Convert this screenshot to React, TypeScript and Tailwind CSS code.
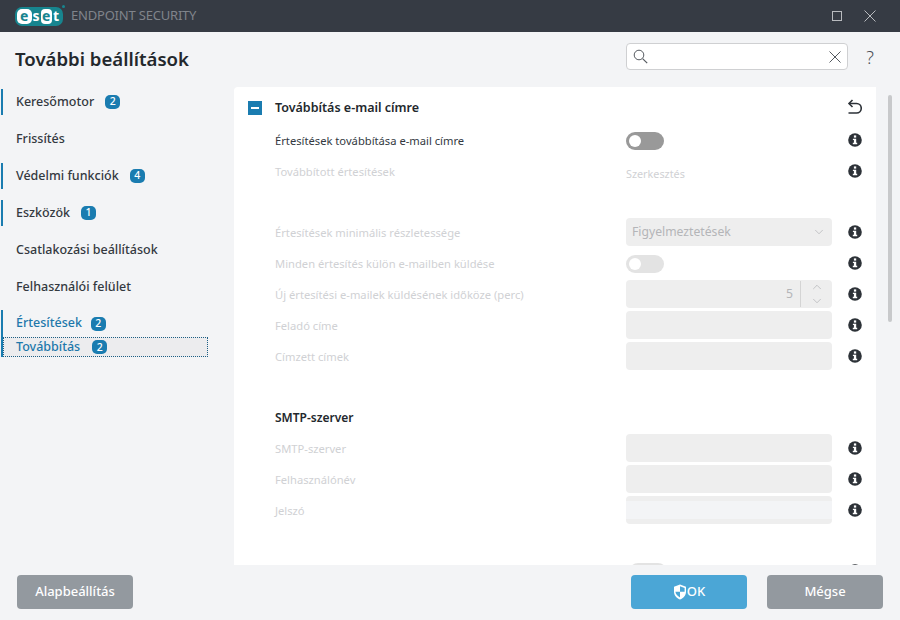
import { ChevronDown, ChevronUp } from "lucide-react"

const font = { fontFamily: '"Noto Sans", sans-serif' }

function Badge({ n }: { n: number }) {
  return (
    <span className="flex h-[14px] w-[15px] items-center justify-center rounded-[5px] bg-[#1a7cb0] text-[10.5px] font-medium leading-none text-white">
      {n}
    </span>
  )
}

function InfoIcon() {
  return (
    <svg width="14" height="14" viewBox="0 0 14 14" className="shrink-0">
      <circle cx="7" cy="7" r="6.8" fill="#2d3238" />
      <rect x="5.9" y="2.4" width="2.3" height="2.2" fill="#fff" />
      <path d="M4.9 5.7h3.3v4.1h1v1.5H4.8V9.8h1.1V7.1h-1z" fill="#fff" />
    </svg>
  )
}

function NavItem({ label, badge, bar }: { label: string; badge?: number; bar?: boolean }) {
  return (
    <div className="flex h-[37px] items-center">
      <div className={`h-[26px] w-[2px] ${bar ? "bg-[#1a7cb0]" : ""}`} />
      <span className="ml-[13px] pt-[1px] text-[12.5px] font-medium text-[#33393f]">{label}</span>
      {badge ? <span className="ml-[11px]"><Badge n={badge} /></span> : null}
    </div>
  )
}

function Row({ label, active, children }: { label: string; active?: boolean; children?: React.ReactNode }) {
  return (
    <div className="flex h-[31px] items-center">
      <span className={`w-[392px] pl-[41px] pt-[2px] text-[11.2px] ${active ? "text-[#33393f]" : "text-[#d0d1d4]"}`}>{label}</span>
      <div className="w-[206px]">{children}</div>
      <div className="mb-[2px] ml-[16px]"><InfoIcon /></div>
    </div>
  )
}

function Field({ children, className }: { children?: React.ReactNode; className?: string }) {
  return <div className={`mb-[2px] flex h-[28px] items-center rounded-[4px] bg-[#eeeeee] ${className ?? ""}`}>{children}</div>
}

function Toggle({ dark }: { dark?: boolean }) {
  return (
    <div className={`flex h-[18px] w-[38px] items-center rounded-full pl-[3px] ${dark ? "bg-[#999999]" : "bg-[#e3e3e3]"}`}>
      <div className="h-[12px] w-[12px] rounded-full bg-white" />
    </div>
  )
}

export default function App() {
  return (
    <div style={font} className="flex h-[620px] w-[900px] flex-col overflow-hidden bg-[#f3f4f6]">
      {/* title bar */}
      <div className="flex h-[32px] shrink-0 items-center bg-[#363b44]">
        <div className="relative ml-[15px] flex h-[19px] w-[48px] items-center justify-center rounded-[7px] bg-[#17858f]">
          <div className="absolute left-[2px] h-[15px] w-[15px] rounded-[5px] bg-white" />
          <div className="absolute left-[26px] h-[15px] w-[11px] rounded-[4px] bg-white" />
          <span className="absolute left-[5px] text-[14px] font-bold leading-none text-[#17858f]">e</span>
          <span className="absolute left-[17.5px] text-[14px] font-bold leading-none text-white">s</span>
          <span className="absolute left-[27px] text-[14px] font-bold leading-none text-[#17858f]">e</span>
          <span className="absolute left-[38px] text-[14px] font-bold leading-none text-white">t</span>
          <div className="absolute -right-[2px] -top-[2px] h-[3px] w-[3px] rounded-full bg-[#17858f]" />
        </div>
        <span className="ml-[8px] text-[13px] tracking-[-0.2px] text-[#80848b]">ENDPOINT SECURITY</span>
        <svg width="12" height="12" viewBox="0 0 12 12" className="ml-auto" fill="none" stroke="#b9bbbf">
          <rect x="1.5" y="1.5" width="9" height="9" />
        </svg>
        <svg width="12" height="12" viewBox="0 0 12 12" className="ml-[21px] mr-[24px]" fill="none" stroke="#b9bbbf">
          <path d="M0.5 0.5l11 11M11.5 0.5l-11 11" />
        </svg>
      </div>

      {/* header */}
      <div className="flex h-[55px] shrink-0 items-center">
        <h1 className="-mt-[2px] ml-[15px] text-[18.6px] font-semibold text-[#23282d]">További beállítások</h1>
        <div className="-mt-[6px] ml-auto flex h-[27px] w-[222px] items-center rounded-[4px] border border-[#cfd0d2] bg-white px-[6px]">
          <svg width="15" height="15" viewBox="0 0 15 15" fill="none" stroke="#555a60">
            <circle cx="6" cy="6" r="4.8" />
            <path d="M9.6 9.6l4.6 4.6" strokeWidth="1.2" />
          </svg>
          <svg width="12" height="12" viewBox="0 0 12 12" className="ml-auto" fill="none" stroke="#555a60">
            <path d="M0.5 0.5l11 11M11.5 0.5l-11 11" />
          </svg>
        </div>
        <span className="-mt-[4px] ml-[18px] mr-[26px] text-[18px] font-light text-[#4a4f55]">?</span>
      </div>

      {/* body */}
      <div className="flex min-h-0 flex-1">
        <nav className="-mt-[4px] w-[234px] shrink-0 pl-[1px]">
          <NavItem label="Keresőmotor" badge={2} bar />
          <NavItem label="Frissítés" />
          <NavItem label="Védelmi funkciók" badge={4} bar />
          <NavItem label="Eszközök" badge={1} bar />
          <NavItem label="Csatlakozási beállítások" />
          <NavItem label="Felhasználói felület" />
          <div className="mt-[5px] w-[207px] border-l-2 border-[#1a7cb0]">
            <div className="flex h-[27px] items-center pl-[13px]">
              <span className="text-[12.5px] font-medium text-[#1d78ab]">Értesítések</span>
              <span className="ml-[9px]"><Badge n={2} /></span>
            </div>
            <div className="flex h-[20px] items-center border border-dotted border-[#1d5f85] bg-[#ececee] pl-[12px]">
              <span className="text-[12.5px] font-medium text-[#1d78ab]">Továbbítás</span>
              <span className="ml-[12px]"><Badge n={2} /></span>
            </div>
          </div>
        </nav>

        <main className="relative min-w-0 flex-1 overflow-hidden rounded-t-[4px]">
          <div className="w-[642px] bg-white pb-[60px]">
            <div className="flex h-[38px] items-center pt-[4px]">
              <div className="ml-[14px] flex h-[14px] w-[14px] items-center justify-center bg-[#1a7cb0]">
                <div className="h-[2px] w-[8px] bg-white" />
              </div>
              <span className="ml-[13px] text-[12.5px] font-semibold text-[#23282d]">Továbbítás e-mail címre</span>
              <svg width="15" height="16" viewBox="0 0 15 16" className="-mt-[2px] ml-auto mr-[14px]" fill="none" stroke="#2d3238" strokeWidth="1.6">
                <path d="M5.500 1L2 4.500 5.500 8" />
                <path d="M2 4.500h7.500a4.500 4.500 0 0 1 0 9.500H1.500" />
              </svg>
            </div>
            <Row label="Értesítések továbbítása e-mail címre" active><Toggle dark /></Row>
            <Row label="Továbbított értesítések"><span className="text-[10.8px] text-[#d0d1d4]">Szerkesztés</span></Row>
            <div className="h-[30px]" />
            <Row label="Értesítések minimális részletessége">
              <Field className="justify-between pl-[6px] pr-[6px]">
                <span className="pt-[2px] text-[12.2px] text-[#b4b5b8]">Figyelmeztetések</span>
                <ChevronDown size={14} strokeWidth={1} color="#a4a5a8" />
              </Field>
            </Row>
            <Row label="Minden értesítés külön e-mailben küldése"><Toggle /></Row>
            <Row label="Új értesítési e-mailek küldésének időköze (perc)">
              <Field className="justify-end">
                <span className="pt-[1px] text-[12.2px] text-[#b4b5b8]">5</span>
                <div className="ml-[7px] h-[26px] w-px bg-[#d4d4d4]" />
                <div className="flex w-[31px] flex-col items-center">
                  <ChevronUp size={14} strokeWidth={1} color="#a4a5a8" />
                  <ChevronDown size={14} strokeWidth={1} color="#a4a5a8" />
                </div>
              </Field>
            </Row>
            <Row label="Feladó címe"><Field /></Row>
            <Row label="Címzett címek"><Field /></Row>
            <div className="h-[30px]" />
            <div className="flex h-[31px] items-center pl-[41px] text-[12px] font-semibold text-[#23282d]">SMTP-szerver</div>
            <Row label="SMTP-szerver"><Field /></Row>
            <Row label="Felhasználónév"><Field /></Row>
            <Row label="Jelszó">
              <Field className="px-0 py-[5px]"><div className="h-full w-full bg-[#f3f4f6]" /></Field>
            </Row>
            <div className="h-[30px]" />
            <Row label=""><div className="ml-[3px] w-[32px]"><Toggle /></div></Row>
          </div>
          {/* scrollbar */}
          <div className="absolute left-[654px] top-[8px] h-[227px] w-[4px] rounded-full bg-[#c8c9cb]" />
        </main>
      </div>

      {/* footer */}
      <div className="flex h-[55px] shrink-0 items-start bg-[#f3f4f6] pt-[10px]">
        <button className="ml-[17px] h-[34px] w-[116px] rounded-[4px] bg-[#93999f] text-[13px] font-medium text-white">Alapbeállítás</button>
        <button className="ml-auto flex h-[34px] w-[116px] items-center justify-center rounded-[4px] bg-[#4ba6d6] text-[13px] font-medium text-white">
          <svg width="14" height="16" viewBox="0 0 14 16">
            <path d="M7 .5l6 2.200v5c0 3.600-2.600 6.400-6 7.800-3.400-1.400-6-4.200-6-7.800v-5z" fill="#fff" />
            <path d="M7 2.200v5.600h4.600V3.900zM7 7.800H2.400c.3 2.600 2.200 4.400 4.600 5.600z" fill="#4ba6d6" />
          </svg>
          OK
        </button>
        <button className="ml-[20px] mr-[17px] h-[34px] w-[116px] rounded-[4px] bg-[#93999f] text-[13px] font-medium text-white">Mégse</button>
      </div>
    </div>
  )
}
